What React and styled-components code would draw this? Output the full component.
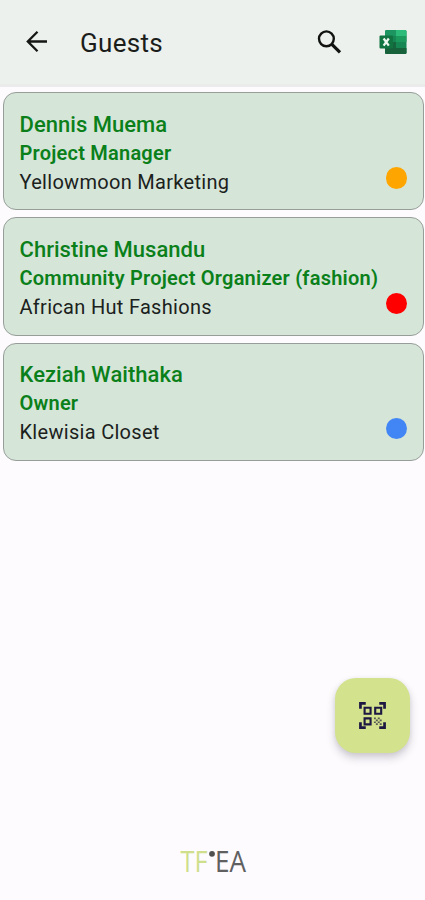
import styled, { createGlobalStyle } from "styled-components";

const GlobalStyle = createGlobalStyle`
* { box-sizing: border-box; }
body {
  margin: 0;
  background-color: #fdfbfe;
  font-family: Roboto, "Liberation Sans", sans-serif;
}
`;

const Screen = styled.div`
width: 100%;
height: 900px;
display: flex;
flex-direction: column;
background-color: #fdfbfe;
overflow: hidden;
`;

const Header = styled.header`
height: 87px;
flex: none;
display: flex;
align-items: center;
padding: 0 18px 1px 25px;
background-color: #ecf1ed;
border-bottom: 3px solid #ebebeb;
`;

const IconButton = styled.button`
display: flex;
padding: 0;
border: none;
background: transparent;
margin-right: ${props => props.$gap || 0}px;
`;

const Title = styled.h1`
flex: 1;
margin: 0;
padding-top: 3px;
font-size: 26px;
font-weight: 400;
line-height: 30px;
letter-spacing: .3px;
color: #1b1d1b;
`;

const GuestList = styled.main`
flex: 1;
display: flex;
flex-direction: column;
gap: 7px;
padding: 5px 1px 0 3px;
`;

const Card = styled.section`
height: 118.3px;
flex: none;
display: flex;
align-items: flex-end;
justify-content: space-between;
padding: 0 16px 12.5px 15.5px;
border: 1px solid #979e99;
border-radius: 13px;
background-color: #d5e6d9;
`;

const Details = styled.div`
display: flex;
flex-direction: column;
white-space: nowrap;
`;

const Name = styled.div`
font-size: 22px;
font-weight: 500;
line-height: 29px;
letter-spacing: .03px;
color: #0b801a;
`;

const Role = styled.div`
font-size: 20px;
font-weight: 600;
line-height: 28px;
letter-spacing: .22px;
color: #0b801a;
`;

const Company = styled.div`
font-size: 20px;
line-height: 30px;
letter-spacing: .3px;
color: #1b211c;
`;

const Status = styled.span`
flex: none;
width: 21.5px;
height: 21.5px;
margin-bottom: 8px;
border-radius: 50%;
background-color: ${props => props.color};
`;

const ScanButton = styled.button`
flex: none;
align-self: flex-end;
display: flex;
align-items: center;
justify-content: center;
width: 75px;
height: 75px;
margin-right: 15px;
padding: 0 1px 1px 0;
border: none;
border-radius: 21px;
background-color: #d3e28c;
box-shadow: 0 5px 8px rgba(60, 50, 70, .22), 0 1px 4px rgba(60, 50, 70, .08);
`;

const Footer = styled.footer`
flex: none;
height: 147px;
display: flex;
justify-content: center;
align-items: flex-start;
padding-top: 87px;
`;

const guests = [
  { name: "Dennis Muema", role: "Project Manager", company: "Yellowmoon Marketing", color: "#ffa500" },
  { name: "Christine Musandu", role: "Community Project Organizer (fashion)", company: "African Hut Fashions", color: "#ff0000" },
  { name: "Keziah Waithaka", role: "Owner", company: "Klewisia Closet", color: "#4285f4" },
];

const BackIcon = () => (
  <svg width="24" height="24" viewBox="0 0 24 24" fill="none" stroke="#151715" strokeWidth="2.3">
    <path d="M22 11.5H3M12.5 1.7L2.8 11.500l9.7 9.8" />
  </svg>
);

const SearchIcon = () => (
  <svg width="26" height="26" viewBox="0 0 26 26" fill="none" stroke="#111311">
    <circle cx="10.4" cy="9.8" r="7.4" strokeWidth="2.4" />
    <path d="M15.900 15.3L24 23.400" strokeWidth="3.2" />
  </svg>
);

const ExcelIcon = () => (
  <svg width="28" height="24" viewBox="0 0 28 24">
    <rect x="6" width="21.5" height="24" rx="1.5" fill="#168653" />
    <path d="M7.5 0H17v6H6V1.500Q6 0 7.500 0z" fill="#1d9560" />
    <path d="M17 0h9q1.500 0 1.500 1.500V6H17z" fill="#2dbb79" />
    <path d="M17 6h10.500v6H17z" fill="#1c9a5e" />
    <path d="M6 12h11v6H6z" fill="#15663d" />
    <path d="M6 18h21.500v4.500q0 1.500-1.500 1.500H7.500Q6 24 6 22.500z" fill="#17613b" />
    <rect x="0.500" y="5.500" width="13.500" height="13" rx="1" fill="#117340" />
    <path d="M4.600 8.500L9.800 15.700M9.800 8.500L4.600 15.700" stroke="#eef8f0" strokeWidth="2.200" />
  </svg>
);

const QrIcon = () => (
  <svg width="27" height="27" viewBox="0 0 28 28" fill="none" stroke="#1d1743">
    <path d="M1.500 7V1.500H7M21 1.500h5.500V7M1.500 21v5.500H7M21 26.500h5.500V21" strokeWidth="2.800" />
    <path d="M5.800 6h6.200v6.200H5.800zM16.800 6H23v6.200h-6.200zM5.800 17H12v6.200H5.800z" strokeWidth="2.200" />
    <path d="M15.500 17h2M19.500 17h2M17.500 19h2M21.500 19h2M15.500 21h2M19.500 21h2M17.500 23h2M21.500 23h2" strokeWidth="1.700" stroke="#555a55" />
  </svg>
);

const Logo = () => (
  <svg width="76" height="44" viewBox="-4 0 76 44" fontFamily="Open Sans, sans-serif" fontSize="28.500">
    <text x="1.500" y="31.500" textLength="27" lengthAdjust="spacingAndGlyphs" fill="#cfdf8b">TF</text>
    <circle cx="33" cy="13.800" r="2.900" fill="#505050" />
    <text x="36" y="31.500" textLength="31" lengthAdjust="spacingAndGlyphs" fill="#606060">EA</text>
  </svg>
);

const Guest = (props) => {
  return (
    <Card>
      <Details>
        <Name>{props.name}</Name>
        <Role>{props.role}</Role>
        <Company>{props.company}</Company>
      </Details>
      <Status color={props.color} />
    </Card>
  );
};

const App = () => {
  return (
    <Screen>
      <GlobalStyle />
      <Header>
        <IconButton $gap={31} aria-label="Back"><BackIcon /></IconButton>
        <Title>Guests</Title>
        <IconButton $gap={37} aria-label="Search"><SearchIcon /></IconButton>
        <IconButton aria-label="Export to Excel"><ExcelIcon /></IconButton>
      </Header>
      <GuestList>
        {guests.map((guest) => <Guest key={guest.name} {...guest} />)}
      </GuestList>
      <ScanButton aria-label="Scan code"><QrIcon /></ScanButton>
      <Footer><Logo /></Footer>
    </Screen>
  );
};

export default App;
